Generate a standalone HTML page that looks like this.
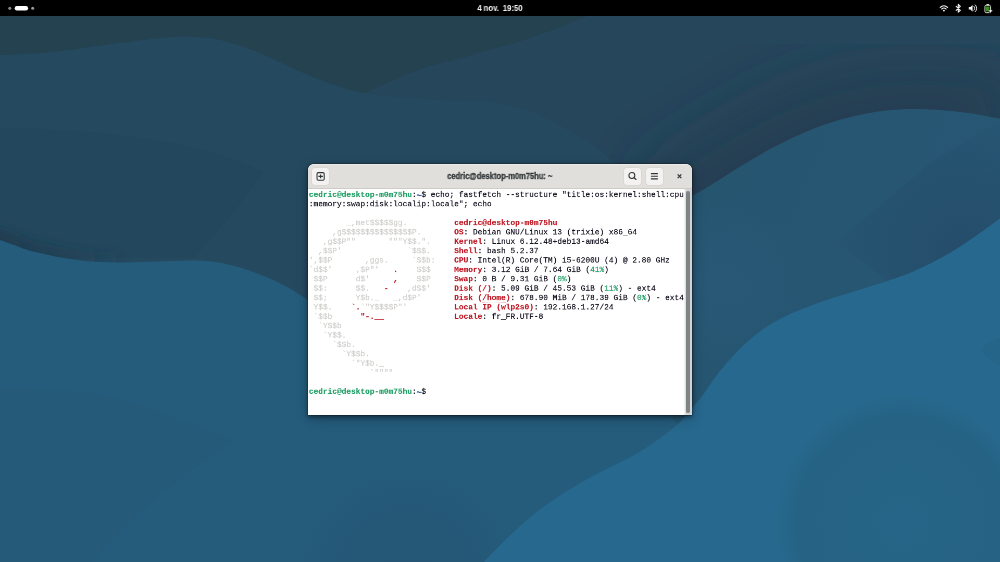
<!DOCTYPE html>
<html lang="fr">
<head>
<meta charset="utf-8">
<title>cedric@desktop-m0m75hu: ~</title>
<style>
html,body{margin:0;padding:0;width:1000px;height:562px;overflow:hidden;background:#264558}
body{position:relative;font-family:"Liberation Sans",sans-serif}
#wall{position:absolute;left:0;top:0;width:1000px;height:562px;display:block}
#topbar{position:absolute;left:0;top:0;width:1000px;height:16.2px;background:#000}
#clock{will-change:transform;position:absolute;left:400px;width:200px;top:3.55px;text-align:center;color:#f2f2f2;font-weight:bold;font-size:8.5px;line-height:9.4px;white-space:pre;transform:scaleX(0.915);transform-origin:50% 50%;word-spacing:-0.3px}
#ws{position:absolute;left:0;top:0}
#tray{position:absolute;left:930px;top:0;width:70px;height:16px}
#win{position:absolute;left:308.2px;top:164.03px;width:383.55px;height:250.75px;background:#fff;border-radius:6px 6px 0 0;
  box-shadow:0 0 0 0.5px rgba(0,0,0,.3),0 1.5px 4px rgba(0,0,0,.45),0 4px 13px rgba(0,0,0,.24);overflow:hidden}
#hdr{position:absolute;left:0;top:0;width:100%;height:24.5px;background:#e1dfdc;border-bottom:0.5px solid #cfccc8;box-sizing:border-box;border-radius:6px 6px 0 0;box-shadow:inset 0 0.6px 0 rgba(255,255,255,.75)}
#title{position:absolute;left:0;width:100%;top:7.8px;text-align:center;font-weight:bold;font-size:8.2px;line-height:10.4px;color:#2e3436;-webkit-text-stroke:0.28px #2e3436;white-space:pre;transform:scaleX(0.922);transform-origin:50% 50%;will-change:transform}
.btn{position:absolute;top:4.15px;width:17.2px;height:16.7px;border-radius:3px;background:#f3f2f0;box-shadow:0 0 0 0.5px rgba(0,0,0,.06)}
#scroll{position:absolute;left:686.1px;top:191px;width:3.6px;height:221.5px;border-radius:1.8px;background:#7f8486}
#strough{position:absolute;left:683.9px;top:188.55px;width:7.85px;height:226.2px;background:linear-gradient(90deg,#fff 0,#e6e6e6 12%,#d6d6d6 28%,#d2d2d2 100%)}
.t{position:absolute;font-family:"Liberation Mono",monospace;font-size:15px;line-height:18px;height:18px;white-space:pre;color:#171421}
.k{color:#171421;-webkit-text-stroke:0.35px #171421}
.w{color:#d0cfcc;-webkit-text-stroke:0.28px #d0cfcc}
.r{color:#c01c28;-webkit-text-stroke:0.3px #c01c28}
.rb{color:#c01c28;font-weight:bold;-webkit-text-stroke:0.25px #c01c28}
.g{color:#26a269;-webkit-text-stroke:0.35px #26a269}
.gb{color:#26a269;font-weight:bold;-webkit-text-stroke:0.25px #26a269}
.bb{color:#12488b;font-weight:bold;-webkit-text-stroke:0.3px #12488b;transform:translateY(2.4px)}
.u{border-bottom:1.2px dotted rgba(192,28,40,.38);height:16.6px}
#term{position:absolute;left:0;top:0;width:1920px;height:1080px;transform:scale(0.5208333);transform-origin:0 0;will-change:transform}
</style>
</head>
<body>
<svg id="wall" viewBox="0 0 1000 562">
  <defs>
    <radialGradient id="g5" cx="903" cy="522" r="128" gradientUnits="userSpaceOnUse">
      <stop offset="0" stop-color="#266587"/><stop offset="0.55" stop-color="#266385"/><stop offset="0.8" stop-color="#256283"/><stop offset="0.92" stop-color="#266689"/><stop offset="1" stop-color="#27688e"/>
    </radialGradient>
    <linearGradient id="g3" x1="700" y1="200" x2="1000" y2="330" gradientUnits="userSpaceOnUse">
      <stop offset="0" stop-color="#265570"/><stop offset="1" stop-color="#265774"/>
    </linearGradient>
    <filter id="bl14" x="-40%" y="-60%" width="180%" height="220%"><feGaussianBlur stdDeviation="30"/></filter>
    <filter id="bl8" x="-20%" y="-60%" width="140%" height="220%"><feGaussianBlur stdDeviation="5"/></filter>
    <radialGradient id="gR" cx="965" cy="250" r="135" gradientUnits="userSpaceOnUse">
      <stop offset="0" stop-color="#244462" stop-opacity="0.5"/><stop offset="0.5" stop-color="#244462" stop-opacity="0.3"/><stop offset="0.9" stop-color="#244462" stop-opacity="0.07"/><stop offset="1" stop-color="#244462" stop-opacity="0"/>
    </radialGradient>
    <radialGradient id="gB" cx="408" cy="582" r="125" gradientUnits="userSpaceOnUse">
      <stop offset="0" stop-color="#244f6d" stop-opacity="0.5"/><stop offset="0.45" stop-color="#244f6d" stop-opacity="0.38"/><stop offset="1" stop-color="#244f6d" stop-opacity="0"/>
    </radialGradient>
    <radialGradient id="gS" cx="722" cy="282" r="85" gradientUnits="userSpaceOnUse">
      <stop offset="0" stop-color="#2b5f82" stop-opacity="0.3"/><stop offset="1" stop-color="#2b5f82" stop-opacity="0"/>
    </radialGradient>
    <linearGradient id="gSL" x1="0" y1="0" x2="130" y2="0" gradientUnits="userSpaceOnUse">
      <stop offset="0" stop-color="#1c3548" stop-opacity="0.6"/><stop offset="0.5" stop-color="#1c3548" stop-opacity="0.3"/><stop offset="1" stop-color="#1c3548" stop-opacity="0"/>
    </linearGradient>
    <clipPath id="cpML"><rect x="0" y="150" width="308" height="160"/></clipPath>
    <clipPath id="cpTR"><rect x="560" y="16" width="440" height="260"/></clipPath>
  </defs>
  <!-- base / top-right region -->
  <rect x="0" y="0" width="1000" height="562" fill="#26465b"/>
  <!-- soft shadow hugging the light-blue wave (top-right) -->
  <g clip-path="url(#cpTR)">
    <path d="M660.0,216.0 C665.5,212.6 684.1,200.9 692.8,195.6 C701.5,190.3 703.5,189.6 712.0,184.4 C720.5,179.2 733.3,170.6 744.0,164.2 C754.7,157.8 765.3,151.5 776.0,146.0 C786.7,140.5 797.3,135.4 808.0,131.0 C818.7,126.6 829.3,122.9 840.0,119.8 C850.7,116.7 861.3,114.2 872.0,112.4 C882.7,110.6 893.3,109.6 904.0,109.2 C914.7,108.8 925.3,109.2 936.0,109.8 C946.7,110.4 957.3,111.5 968.0,113.0 C978.7,114.5 992.7,117.4 1000.0,118.8 C1007.3,120.2 1010.0,121.0 1012.0,121.5" fill="none" stroke="#1f374a" stroke-opacity="0.5" stroke-width="90" filter="url(#bl14)"/>
  </g>
  <!-- dark top-left -->
  <path d="M-10,0 L600,0 L600.0,10.0 C597.7,11.1 591.0,14.4 586.0,16.6 C581.0,18.8 577.0,20.5 569.7,23.4 C562.4,26.3 551.4,30.5 542.2,33.8 C533.1,37.0 523.9,40.1 514.8,42.9 C505.7,45.6 496.5,47.7 487.4,50.3 C478.3,52.9 469.6,55.8 460.0,58.5 C450.4,61.2 439.2,63.5 430.0,66.2 C420.8,69.0 413.3,71.7 405.0,75.0 C396.7,78.3 386.7,83.2 380.0,86.2 C373.3,89.3 367.5,92.1 365.0,93.2 C362.5,92.7 355.8,91.6 350.0,90.0 C344.2,88.4 337.5,86.5 330.0,83.8 C322.5,81.0 313.3,77.3 305.0,73.8 C296.7,70.2 288.3,66.0 280.0,62.2 C271.7,58.5 263.3,54.5 255.0,51.2 C246.7,48.0 237.1,44.9 230.0,42.8 C222.9,40.7 219.2,39.8 212.5,38.8 C205.8,37.7 196.2,37.0 190.0,36.8 C183.8,36.5 181.7,36.6 175.0,37.0 C168.3,37.4 158.3,38.3 150.0,39.2 C141.7,40.2 133.3,41.4 125.0,42.5 C116.7,43.6 108.3,44.6 100.0,45.8 C91.7,46.9 83.3,48.4 75.0,49.5 C66.7,50.6 58.3,51.7 50.0,52.5 C41.7,53.3 33.3,53.8 25.0,54.2 C16.7,54.7 5.8,54.8 0.0,55.0 C-5.8,55.2 -8.3,55.2 -10.0,55.2 Z" fill="#254251"/>
  <!-- left wave -->
  <path d="M-10.0,55.2 C-8.3,55.2 -5.8,55.2 0.0,55.0 C5.8,54.8 16.7,54.7 25.0,54.2 C33.3,53.8 41.7,53.3 50.0,52.5 C58.3,51.7 66.7,50.6 75.0,49.5 C83.3,48.4 91.7,46.9 100.0,45.8 C108.3,44.6 116.7,43.6 125.0,42.5 C133.3,41.4 141.7,40.2 150.0,39.2 C158.3,38.3 168.3,37.4 175.0,37.0 C181.7,36.6 183.8,36.5 190.0,36.8 C196.2,37.0 205.8,37.7 212.5,38.8 C219.2,39.8 222.9,40.7 230.0,42.8 C237.1,44.9 246.7,48.0 255.0,51.2 C263.3,54.5 271.7,58.5 280.0,62.2 C288.3,66.0 296.7,70.2 305.0,73.8 C313.3,77.3 322.5,81.0 330.0,83.8 C337.5,86.5 344.2,88.4 350.0,90.0 C355.8,91.6 362.5,92.7 365.0,93.2 C369.2,93.8 380.8,95.3 390.0,96.2 C399.2,97.2 409.2,98.0 420.0,98.8 C430.8,99.5 443.8,100.3 455.0,100.9 C466.2,101.5 477.4,101.4 487.4,102.3 C497.4,103.2 505.7,104.2 514.8,106.5 C523.9,108.8 533.1,111.9 542.2,116.0 C551.4,120.1 560.6,125.5 569.7,131.0 C578.8,136.5 589.3,143.5 597.0,149.0 C604.7,154.5 608.8,158.0 616.0,164.0 C623.2,170.0 636.0,181.5 640.0,185.0 L720,300 L720,572 L-10,572 Z" fill="#254a60"/>
  <!-- subtle darker V inside left wave -->
  <path d="M-10,128 C90,128 200,140 264,172 C240,205 215,235 194,258 L-10,258 Z" fill="#23475c"/>
  <!-- soft shadow above left bright wave (left part) -->
  <g clip-path="url(#cpML)">
    <path d="M-10.0,236.0 C-8.3,236.7 -4.3,238.4 0.0,240.0 C4.3,241.6 10.7,243.9 16.0,245.8 C21.3,247.7 24.0,249.2 32.0,251.2 C40.0,253.2 53.3,256.2 64.0,258.0 C74.7,259.8 85.3,261.1 96.0,261.8 C106.7,262.5 117.3,262.4 128.0,262.4 C138.7,262.3 149.3,261.8 160.0,261.5 C170.7,261.2 184.0,260.6 192.0,260.5 C200.0,260.4 202.7,260.7 208.0,261.2 C213.3,261.7 218.7,262.3 224.0,263.4 C229.3,264.5 234.7,266.0 240.0,267.6 C245.3,269.2 250.7,271.0 256.0,273.0 C261.3,275.0 266.7,277.0 272.0,279.4 C277.3,281.8 282.2,284.1 288.0,287.4 C293.8,290.7 300.0,294.8 307.0,299.2 C314.0,303.6 326.2,311.5 330.0,314.0" fill="none" stroke="url(#gSL)" stroke-width="20" filter="url(#bl8)"/>
  </g>
  <!-- light-blue wave from right -->
  <path d="M660.0,216.0 C665.5,212.6 684.1,200.9 692.8,195.6 C701.5,190.3 703.5,189.6 712.0,184.4 C720.5,179.2 733.3,170.6 744.0,164.2 C754.7,157.8 765.3,151.5 776.0,146.0 C786.7,140.5 797.3,135.4 808.0,131.0 C818.7,126.6 829.3,122.9 840.0,119.8 C850.7,116.7 861.3,114.2 872.0,112.4 C882.7,110.6 893.3,109.6 904.0,109.2 C914.7,108.8 925.3,109.2 936.0,109.8 C946.7,110.4 957.3,111.5 968.0,113.0 C978.7,114.5 992.7,117.4 1000.0,118.8 C1007.3,120.2 1010.0,121.0 1012.0,121.5 L1012,572 L640,572 Z" fill="url(#g3)"/>
  <!-- faint lighter spot right of window -->
  <circle cx="722" cy="282" r="85" fill="url(#gS)"/>
  <!-- left bright wave -->
  <path d="M-10.0,236.0 C-8.3,236.7 -4.3,238.4 0.0,240.0 C4.3,241.6 10.7,243.9 16.0,245.8 C21.3,247.7 24.0,249.2 32.0,251.2 C40.0,253.2 53.3,256.2 64.0,258.0 C74.7,259.8 85.3,261.1 96.0,261.8 C106.7,262.5 117.3,262.4 128.0,262.4 C138.7,262.3 149.3,261.8 160.0,261.5 C170.7,261.2 184.0,260.6 192.0,260.5 C200.0,260.4 202.7,260.7 208.0,261.2 C213.3,261.7 218.7,262.3 224.0,263.4 C229.3,264.5 234.7,266.0 240.0,267.6 C245.3,269.2 250.7,271.0 256.0,273.0 C261.3,275.0 266.7,277.0 272.0,279.4 C277.3,281.8 282.2,284.1 288.0,287.4 C293.8,290.7 300.0,294.8 307.0,299.2 C314.0,303.6 314.5,305.2 330.0,314.0 C345.5,322.8 368.3,341.0 400.0,352.0 C431.7,363.0 483.3,372.3 520.0,380.0 C556.7,387.7 595.2,392.1 620.0,398.0 C644.8,403.9 660.6,412.4 668.7,415.3 L678.3,424.3 L678.3,572 L-10,572 Z" fill="#255c7c"/>
  <!-- subtle V bottom-left -->
  <path d="M-10,387 C40,389 70,390 100,395 C125,400 148,407 167,415 C192,424 215,433 234,441 C180,475 125,520 84,572 L-10,572 Z" fill="#255a79"/>
  <!-- diamond shadow on light-blue wave, right side -->
  <path d="M888.6,282 L837,242 L930,163 L1000,120 L1000,240 Z" fill="url(#gR)"/>
  <!-- radial dark spot bottom-centre -->
  <circle cx="408" cy="582" r="125" fill="url(#gB)"/>
  <!-- brighter wave bottom-right -->
  <path d="M1012.0,209.0 C1010.0,210.5 1005.6,214.0 1000.0,218.2 C994.4,222.4 987.2,228.1 978.2,234.2 C969.2,240.3 956.9,248.9 946.2,255.0 C935.5,261.1 923.8,266.7 914.2,271.0 C904.6,275.3 899.3,277.0 888.6,280.6 C877.9,284.2 861.9,289.1 850.1,292.8 C838.4,296.5 828.8,299.1 818.1,303.0 C807.4,306.9 795.1,311.6 786.0,315.9 C776.9,320.2 770.1,324.4 763.7,328.7 C757.3,333.0 753.0,336.7 747.6,341.5 C742.2,346.3 736.9,351.6 731.6,357.5 C726.3,363.4 720.4,370.4 715.6,376.7 C710.8,382.9 706.9,389.6 702.8,395.0 C698.7,400.4 695.2,404.4 691.1,409.2 C687.0,414.0 683.1,419.1 678.3,423.7 C673.5,428.2 667.6,432.5 662.3,436.5 C656.9,440.5 651.6,444.2 646.2,447.7 C640.9,451.2 635.5,454.4 630.2,457.3 C624.9,460.2 619.5,462.6 614.2,465.3 C608.9,468.0 603.5,470.5 598.2,473.3 C592.9,476.1 587.6,478.9 582.2,482.0 C576.9,485.1 571.5,488.2 566.1,491.6 C560.8,495.0 555.4,498.5 550.1,502.2 C544.8,505.9 539.4,509.7 534.1,514.0 C528.8,518.3 523.5,522.9 518.1,527.8 C512.8,532.7 507.4,537.9 502.0,543.2 C496.6,548.5 490.0,555.5 486.0,559.8 C482.0,564.1 479.3,567.5 478.0,569.0 L1012,572 Z" fill="#27688e"/>
  <circle cx="903" cy="522" r="128" fill="url(#g5)"/>
  <path d="M1000,338 C992,340 985,344 981,350 C986,357 993,362 1000,365 Z" fill="#256284" opacity="0.45"/>
</svg>

<div id="topbar"></div>
<svg id="ws" width="60" height="17" viewBox="0 0 60 17">
  <circle cx="9.8" cy="8.3" r="1.5" fill="#8a8a8a"/>
  <rect x="14.7" y="6.1" width="13.4" height="4.5" rx="2.25" fill="#fff"/>
  <circle cx="32.7" cy="8.3" r="1.5" fill="#9a9a9a"/>
</svg>
<div id="clock">4 nov.  19:50</div>
<svg id="tray" viewBox="930 0 70 16">
  <!-- wifi -->
  <g fill="none" stroke="#f2f2f2" stroke-linecap="round">
    <path d="M940.2,7.3 A5.4,5.4 0 0 1 947.6,7.3" stroke-width="1.15"/>
    <path d="M941.7,9 A3.3,3.3 0 0 1 946.1,9" stroke-width="1.1"/>
  </g>
  <circle cx="943.9" cy="10.6" r="0.95" fill="#f2f2f2"/>
  <!-- bluetooth -->
  <path d="M956.2,6.3 L960.3,10.3 L958.3,12.2 L958.3,4.4 L960.3,6.3 L956.2,10.3" fill="none" stroke="#f2f2f2" stroke-width="1.1" stroke-linejoin="round" stroke-linecap="round"/>
  <!-- volume -->
  <path d="M968.8,7 L970.4,7 L972.6,4.9 L972.6,11.7 L970.4,9.6 L968.8,9.6 Z" fill="#f2f2f2"/>
  <path d="M973.9,6.3 A2.6,2.6 0 0 1 973.9,10.3" fill="none" stroke="#f2f2f2" stroke-width="0.9" stroke-linecap="round"/>
  <path d="M975.3,4.9 A4.6,4.6 0 0 1 975.3,11.7" fill="none" stroke="#f2f2f2" stroke-width="0.9" stroke-linecap="round"/>
  <!-- battery -->
  <rect x="986.5" y="4" width="2.5" height="1.3" fill="#dcdcdc"/>
  <rect x="984.95" y="5.25" width="5.6" height="7.4" rx="1.2" fill="none" stroke="#dcdcdc" stroke-width="0.95"/>
  <rect x="986" y="6.5" width="3.5" height="4.9" fill="#3c8f1e"/>
  <circle cx="990.5" cy="10.8" r="1.9" fill="#000"/>
  <path d="M990.5,8.9 L991.1,10.2 L992.4,10.8 L991.1,11.4 L990.5,12.7 L989.9,11.4 L988.6,10.8 L989.9,10.2 Z" fill="#f6f6f6" stroke="#f6f6f6" stroke-width="0.35" stroke-linejoin="round"/>
</svg>

<div id="win">
  <div id="hdr">
    <div class="btn" style="left:3.6px"></div>
    <div class="btn" style="left:315.4px"></div>
    <div class="btn" style="left:338.1px"></div>
    <div id="title">cedric@desktop-m0m75hu: ~</div>
    <svg style="position:absolute;left:0;top:0" width="384" height="24" viewBox="0 0 384 24">
      <!-- new tab -->
      <rect x="9.05" y="8.6" width="7.15" height="7.55" rx="1.25" fill="none" stroke="#2e3436" stroke-width="1.05"/>
      <path d="M12.62,10.55 V14.2 M10.35,12.38 H14.9" stroke="#2e3436" stroke-width="1.15" fill="none"/>
      <!-- search -->
      <circle cx="323.85" cy="11.45" r="2.95" fill="none" stroke="#2e3436" stroke-width="1.05"/>
      <path d="M326,13.6 L328,15.5" stroke="#2e3436" stroke-width="1.15" stroke-linecap="round"/>
      <!-- menu -->
      <path d="M342.9,9.55 H349.9 M342.9,12.2 H349.9 M342.9,14.9 H349.9" stroke="#2e3436" stroke-width="1.15"/>
      <!-- close -->
      <path d="M369.65,10.4 L373.35,14.1 M373.35,10.4 L369.65,14.1" stroke="#2e3436" stroke-width="1.25" stroke-linecap="butt"/>
    </svg>
  </div>
</div>
<div id="strough"></div>
<div id="scroll"></div>
<div id="term">
<span class="t gb" style="left:593.000px;top:365.900px">cedric@desktop-m0m75hu</span>
<span class="t k" style="left:791.000px;top:365.900px">:</span>
<span class="t bb" style="left:800.000px;top:365.900px">~</span>
<span class="t k" style="left:809.000px;top:365.900px">$</span>
<span class="t k" style="left:827.000px;top:365.900px">echo; fastfetch --structure "title:os:kernel:shell:cpu</span>
<span class="t k" style="left:593.000px;top:383.900px">:memory:swap:disk:localip:locale"; echo</span>
<span class="t w" style="left:665.000px;top:419.900px">_,met$$$$$gg.</span>
<span class="t w" style="left:638.000px;top:437.900px">,g$$$$$$$$$$$$$$$P.</span>
<span class="t w" style="left:620.000px;top:455.900px">,g$$P""</span>
<span class="t w" style="left:746.000px;top:455.900px">"""Y$$.".</span>
<span class="t w" style="left:611.000px;top:473.900px">,$$P'</span>
<span class="t w" style="left:782.000px;top:473.900px">`$$$.</span>
<span class="t w" style="left:593.000px;top:491.900px">',$$P</span>
<span class="t w" style="left:701.000px;top:491.900px">,ggs.</span>
<span class="t w" style="left:791.000px;top:491.900px">`$$b:</span>
<span class="t w" style="left:593.000px;top:509.900px">`d$$'</span>
<span class="t w" style="left:683.000px;top:509.900px">,$P"'</span>
<span class="t rb" style="left:755.000px;top:509.900px">.</span>
<span class="t w" style="left:800.000px;top:509.900px">$$$</span>
<span class="t w" style="left:602.000px;top:527.900px">$$P</span>
<span class="t w" style="left:683.000px;top:527.900px">d$'</span>
<span class="t rb" style="left:755.000px;top:527.900px">,</span>
<span class="t w" style="left:800.000px;top:527.900px">$$P</span>
<span class="t w" style="left:602.000px;top:545.900px">$$:</span>
<span class="t w" style="left:683.000px;top:545.900px">$$.</span>
<span class="t rb" style="left:737.000px;top:545.900px">-</span>
<span class="t w" style="left:782.000px;top:545.900px">,d$$'</span>
<span class="t w" style="left:602.000px;top:563.900px">$$;</span>
<span class="t w" style="left:683.000px;top:563.900px">Y$b._</span>
<span class="t w" style="left:755.000px;top:563.900px">_,d$P'</span>
<span class="t w" style="left:602.000px;top:581.900px">Y$$.</span>
<span class="t rb" style="left:674.000px;top:581.900px">`.</span>
<span class="t w" style="left:692.000px;top:581.900px">`"Y$$$$P"'</span>
<span class="t w" style="left:602.000px;top:599.900px">`$$b</span>
<span class="t rb" style="left:692.000px;top:599.900px">"-.__</span>
<span class="t w" style="left:611.000px;top:617.900px">`Y$$b</span>
<span class="t w" style="left:620.000px;top:635.900px">`Y$$.</span>
<span class="t w" style="left:638.000px;top:653.900px">`$$b.</span>
<span class="t w" style="left:656.000px;top:671.900px">`Y$$b.</span>
<span class="t w" style="left:674.000px;top:689.900px">`"Y$b._</span>
<span class="t w" style="left:710.000px;top:707.900px">`""""</span>
<span class="t rb" style="left:872.000px;top:419.900px">cedric</span>
<span class="t r" style="left:926.000px;top:419.900px">@</span>
<span class="t rb" style="left:935.000px;top:419.900px">desktop-m0m75hu</span>
<span class="t rb" style="left:872.000px;top:437.900px">OS</span>
<span class="t k" style="left:890.000px;top:437.900px">: Debian GNU/Linux 13 (trixie) x86_64</span>
<span class="t rb" style="left:872.000px;top:455.900px">Kernel</span>
<span class="t k" style="left:926.000px;top:455.900px">: Linux 6.12.48+deb13-amd64</span>
<span class="t rb" style="left:872.000px;top:473.900px">Shell</span>
<span class="t k" style="left:917.000px;top:473.900px">: bash 5.2.37</span>
<span class="t rb" style="left:872.000px;top:491.900px">CPU</span>
<span class="t k" style="left:899.000px;top:491.900px">: Intel(R) Core(TM) i5-6200U (4) @ 2.80 GHz</span>
<span class="t rb" style="left:872.000px;top:509.900px">Memory</span>
<span class="t k" style="left:926.000px;top:509.900px">: 3.12 GiB / 7.64 GiB (</span>
<span class="t g" style="left:1133.000px;top:509.900px">41%</span>
<span class="t k" style="left:1160.000px;top:509.900px">)</span>
<span class="t rb" style="left:872.000px;top:527.900px">Swap</span>
<span class="t k" style="left:908.000px;top:527.900px">: 0 B / 9.31 GiB (</span>
<span class="t g" style="left:1070.000px;top:527.900px">0%</span>
<span class="t k" style="left:1088.000px;top:527.900px">)</span>
<span class="t rb" style="left:872.000px;top:545.900px">Disk (</span>
<span class="t rb u" style="left:926.000px;top:545.900px">/</span>
<span class="t rb" style="left:935.000px;top:545.900px">)</span>
<span class="t k" style="left:944.000px;top:545.900px">: 5.09 GiB / 45.53 GiB (</span>
<span class="t g" style="left:1160.000px;top:545.900px">11%</span>
<span class="t k" style="left:1187.000px;top:545.900px">) - ext4</span>
<span class="t rb" style="left:872.000px;top:563.900px">Disk (</span>
<span class="t rb u" style="left:926.000px;top:563.900px">/home</span>
<span class="t rb" style="left:971.000px;top:563.900px">)</span>
<span class="t k" style="left:980.000px;top:563.900px">: 678.90 MiB / 178.39 GiB (</span>
<span class="t g" style="left:1223.000px;top:563.900px">0%</span>
<span class="t k" style="left:1241.000px;top:563.900px">) - ext4</span>
<span class="t rb" style="left:872.000px;top:581.900px">Local IP (wlp2s0)</span>
<span class="t k" style="left:1025.000px;top:581.900px">: 192.168.1.27/24</span>
<span class="t rb" style="left:872.000px;top:599.900px">Locale</span>
<span class="t k" style="left:926.000px;top:599.900px">: fr_FR.UTF-8</span>
<span class="t gb" style="left:593.000px;top:743.900px">cedric@desktop-m0m75hu</span>
<span class="t k" style="left:791.000px;top:743.900px">:</span>
<span class="t bb" style="left:800.000px;top:743.900px">~</span>
<span class="t k" style="left:809.000px;top:743.900px">$</span>
</div>
</body>
</html>
